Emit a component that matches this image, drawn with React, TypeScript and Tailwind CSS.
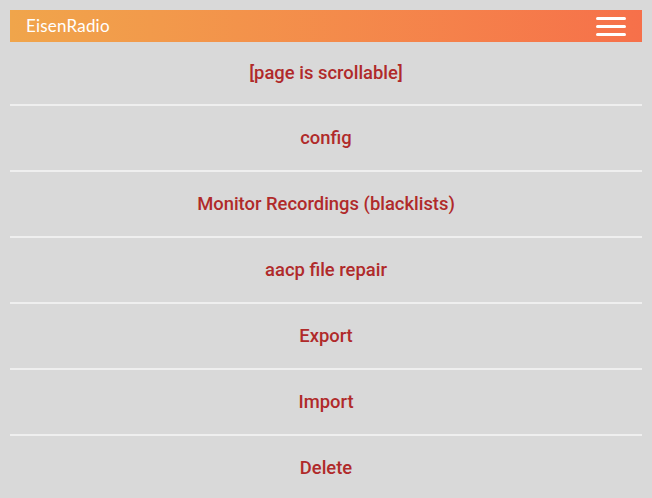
import React from 'react';

const items = [
  '[page is scrollable]',
  'config',
  'Monitor Recordings (blacklists)',
  'aacp file repair',
  'Export',
  'Import',
  'Delete',
];

export default function App() {
  return (
    <div className="min-h-[498px] bg-[#d9d9d9] px-[10px] pt-[10px]">
      {/* header */}
      <div className="flex h-[32px] items-center justify-between bg-gradient-to-r from-[#f0a54b] to-[#f6704a] pl-[16px] pr-[16px]">
        <span className="text-[17px] tracking-[0.2px] text-white" style={{ fontFamily: 'Lato, "Noto Sans", sans-serif' }}>
          EisenRadio
        </span>
        <div className="flex flex-col gap-[5px]">
          <span className="block h-[3px] w-[30px] rounded-full bg-white" />
          <span className="block h-[3px] w-[30px] rounded-full bg-white" />
          <span className="block h-[3px] w-[30px] rounded-full bg-white" />
        </div>
      </div>

      {/* menu */}
      <div className="flex flex-col" style={{ fontFamily: 'Roboto, "Liberation Sans", sans-serif' }}>
        {items.map((label, i) => (
          <div
            key={label}
            className={
              'flex items-center justify-center text-[18.4px] font-medium text-[#b02a2a] ' +
              (i > 0 ? 'h-[66px] border-t-2 border-[#efefef]' : 'h-[62px]')
            }
          >
            {label}
          </div>
        ))}
      </div>
    </div>
  );
}
